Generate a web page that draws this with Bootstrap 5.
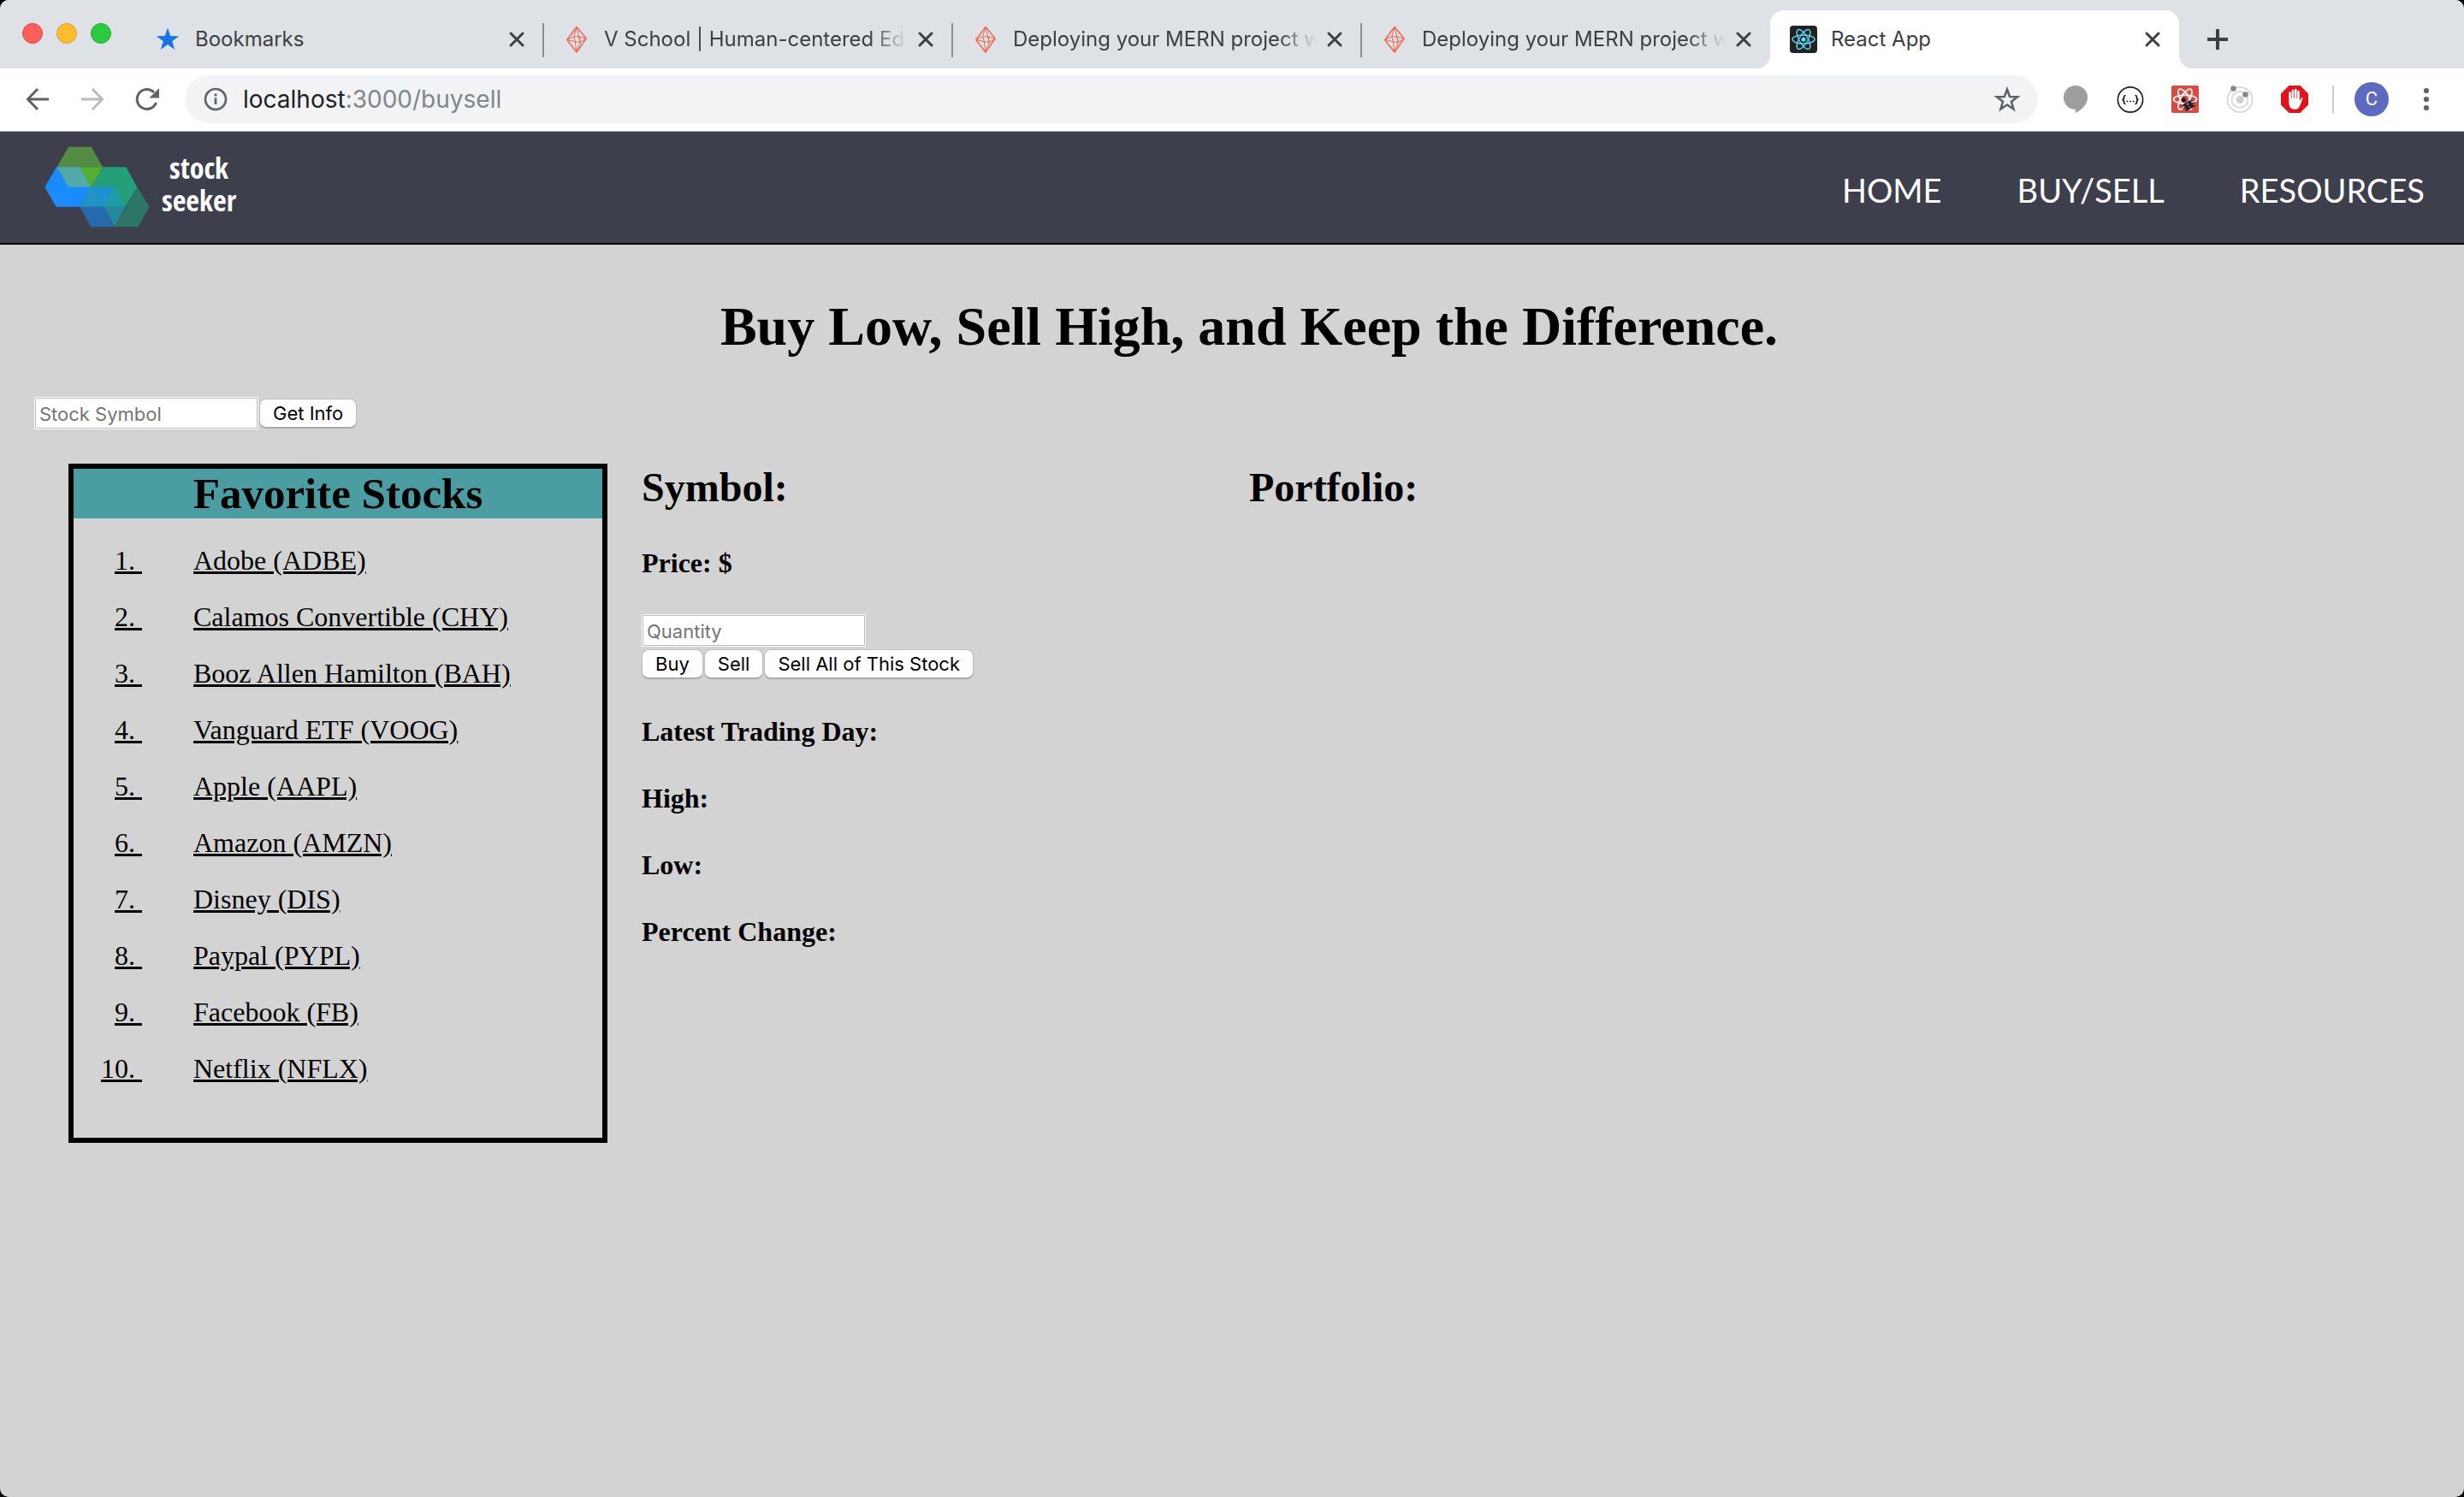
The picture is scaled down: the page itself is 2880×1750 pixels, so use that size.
<!DOCTYPE html>
<html lang="en">
<head>
<meta charset="utf-8">
<meta name="viewport" content="width=device-width, initial-scale=1">
<title>React App</title>
<link rel="stylesheet" href="https://cdn.jsdelivr.net/npm/bootstrap@5.3.0/dist/css/bootstrap.min.css">
<style>
  body { background: #000; font-family: Inter, "Liberation Sans", sans-serif; }
  svg { display: block; flex: none; }
  .browser { background: #d3d3d3; border-radius: 10px; overflow: hidden; }

  /* Tab strip */
  .tab-strip { background: #dee1e6; height: 80px; padding-top: 12px; }
  .lights { width: 157px; padding: 15px 0 0 26px; gap: 16px; }
  .light { width: 24px; height: 24px; border-radius: 50%; border: 1px solid; }
  .light-close { background: #ff5f58; border-color: #e0443e; }
  .light-min { background: #ffbd2e; border-color: #dea123; }
  .light-max { background: #2aca41; border-color: #1aab29; }
  .btab { width: 478px; height: 68px; padding: 0 15px 0 23px; position: relative; }
  .btab-line::after { content: ""; position: absolute; right: -1px; top: 15px; width: 2px; height: 40px; background: #898d92; }
  .btab-title { margin-left: 16px; font-size: 24px; line-height: 32px; color: #3c4043; white-space: nowrap; overflow: hidden; flex: 1; text-decoration: none; }
  .btab-fade { -webkit-mask-image: linear-gradient(to right, #000 calc(100% - 44px), transparent); mask-image: linear-gradient(to right, #000 calc(100% - 44px), transparent); }
  .btab-active { background: #fff; border-radius: 16px 16px 0 0; }
  .btab-active::before, .btab-active::after { content: ""; position: absolute; bottom: 0; width: 16px; height: 16px; }
  .btab-active::before { left: -16px; background: radial-gradient(circle at 0 0, transparent 16px, #fff 16px); }
  .btab-active::after { right: -16px; background: radial-gradient(circle at 100% 0, transparent 16px, #fff 16px); }
  .icon-btn { border: 0; background: none; padding: 0; width: 32px; height: 32px; flex: none; margin-left: 6px; }
  .icon-btn-plain { margin-left: 0; }
  .new-tab { margin: 18px 0 0 29px; }

  /* Toolbar */
  .toolbar { background: #fff; height: 74px; border-bottom: 1px solid #b0b0b3; padding: 8px 28px 9px; }
  .nav-arrows { gap: 32px; width: 188px; }
  .omnibox { background: #f1f3f4; border-radius: 28px; height: 56px; padding: 0 20px; flex: 1; }
  .address { font-size: 28px; line-height: 36px; margin-left: 16px; flex: 1; color: #80868b; }
  .address b { font-weight: 400; color: #202124; }
  .extensions { gap: 32px; margin-left: 28px; }
  .toolbar-rule { width: 2px; height: 32px; background: #ccced0; margin: 0 24px 0 28px; }
  .avatar { width: 40px; height: 40px; border: 0; border-radius: 50%; background: #5c6bc0; color: #fff; font: 22px/40px Roboto, sans-serif; padding: 0; margin-right: 28px; }

  /* Site header */
  .site-nav { background: #3d3f4d; height: 132px; border-bottom: 2px solid #000; padding: 0 46px 0 52px; }
  .brand-name { font: 34px/38px "Liberation Sans Narrow", "Open Sans Condensed", "Liberation Sans", sans-serif; color: #fff; text-align: center; margin-left: 14px; padding-bottom: 6px; }
  .site-brand { text-decoration: none; padding-bottom: 2px; }
  .site-links { gap: 88px; }
  .site-links a { font: 38px/48px Lato, sans-serif; color: #fff; text-decoration: none; padding-top: 6px; }

  /* Page */
  .page { font-family: "Liberation Serif", serif; color: #000; padding: 59px 0 412px 40px; }
  .page h1 { font-size: 64px; line-height: 74px; font-weight: 700; margin: 0 0 45px; text-align: center; }
  .page h2 { font-size: 48px; line-height: 56px; font-weight: 700; margin: 0 0 42px; }
  .page h3 { font-size: 32px; line-height: 36px; font-weight: 700; margin: 0 0 42px; }
  .field { display: block; width: 262px; height: 38px; border: 1px solid #fff; box-shadow: inset 0 0 0 1px #bdbdbd; border-radius: 0; background: #fff; padding: 1px 5px 0; font: 22px/28px Inter, sans-serif; color: #000; }
  .field::placeholder { color: #757575; opacity: 1; }
  .push { height: 34px; border: 1px solid #c0c0c0; border-bottom-color: #a2a2a2; border-radius: 8px; background: #fff; padding: 0 15px; font: 22px/30px Inter, sans-serif; color: #000; box-shadow: 0 1px 1px rgba(0,0,0,.18); white-space: nowrap; }
  .lookup { gap: 1px; margin-bottom: 40px; }
  .trade { margin-bottom: 42px; }
  .trade-buttons { gap: 1px; padding: 3px 0 2px; }
  .board > .favorites-col { padding: 0 40px; }
  .favorites { border: 6px solid #000; }
  .favorites h2 { background: #4a9ea1; font-size: 51px; line-height: 58px; margin: 0; text-align: center; }
  .favorites ol { list-style: none; margin: 0; padding: 16px 0 48px; }
  .favorites a { display: flex; gap: 60px; font-size: 32px; line-height: 66px; color: #000; text-decoration: none; }
  .favorites span { text-decoration: underline; white-space: pre; }
  .favorites .rank-cell { width: 80px; text-align: right; text-decoration: none; }
</style>
<script src="https://cdn.jsdelivr.net/npm/bootstrap@5.3.0/dist/js/bootstrap.bundle.min.js"></script>
</head>
<body>
<svg width="0" height="0" class="position-absolute" aria-hidden="true">
  <symbol id="i-close" viewBox="0 0 32 32"><path d="M9 9l14 14M23 9L9 23" stroke="#3c4043" stroke-width="3" fill="none" stroke-linecap="round"/></symbol>
  <symbol id="i-gem" viewBox="0 0 32 32"><g fill="none" stroke="#f0654e" stroke-linejoin="round"><path d="M16 1.500L4.700 16.500 16 31 27.200 15z" stroke-width="1.400"/><path d="M16 1.500L12.700 12.700 14.300 18.500 16 31 20.300 19 18.700 12.900zM4.700 16.500L12.700 12.700 18.700 12.900 27.200 15 20.300 19.500 14.300 18.700zM18.700 12.900L20.300 19" stroke-width="1"/></g></symbol>
</svg>
<div class="browser min-vh-100">
  <header class="tab-strip d-flex">
    <div class="lights d-flex">
      <span class="light light-close"></span><span class="light light-min"></span><span class="light light-max"></span>
    </div>
    <div class="btab btab-line d-flex align-items-center">
      <svg width="32" height="32" viewBox="0 0 32 32"><path fill="#1a73e8" d="M16 2.500l3.200 9.600 10 .1-8 6 3 9.800-8.200-5.900-8.200 5.900 3-9.800-8-6 10-.1z"/></svg>
      <a href="#" class="btab-title">Bookmarks</a>
      <button class="icon-btn" aria-label="Close tab"><svg width="32" height="32"><use href="#i-close"/></svg></button>
    </div>
    <div class="btab btab-line d-flex align-items-center">
      <svg width="32" height="32"><use href="#i-gem"/></svg>
      <a href="#" class="btab-title btab-fade">V School | Human-centered Ed</a>
      <button class="icon-btn" aria-label="Close tab"><svg width="32" height="32"><use href="#i-close"/></svg></button>
    </div>
    <div class="btab btab-line d-flex align-items-center">
      <svg width="32" height="32"><use href="#i-gem"/></svg>
      <a href="#" class="btab-title btab-fade">Deploying your MERN project w</a>
      <button class="icon-btn" aria-label="Close tab"><svg width="32" height="32"><use href="#i-close"/></svg></button>
    </div>
    <div class="btab d-flex align-items-center">
      <svg width="32" height="32"><use href="#i-gem"/></svg>
      <a href="#" class="btab-title btab-fade">Deploying your MERN project w</a>
      <button class="icon-btn" aria-label="Close tab"><svg width="32" height="32"><use href="#i-close"/></svg></button>
    </div>
    <div class="btab btab-active d-flex align-items-center">
      <svg width="32" height="32" viewBox="0 0 32 32"><rect width="32" height="32" rx="4" fill="#222"/><g fill="none" stroke="#61dafb" stroke-width="1.400"><ellipse cx="16" cy="16" rx="13" ry="5"/><ellipse cx="16" cy="16" rx="13" ry="5" transform="rotate(60 16 16)"/><ellipse cx="16" cy="16" rx="13" ry="5" transform="rotate(120 16 16)"/></g><circle cx="16" cy="16" r="2.600" fill="#61dafb"/></svg>
      <a href="#" class="btab-title">React App</a>
      <button class="icon-btn" aria-label="Close tab"><svg width="32" height="32"><use href="#i-close"/></svg></button>
    </div>
    <button class="icon-btn new-tab" aria-label="New tab"><svg width="32" height="32" viewBox="0 0 32 32"><path d="M16 4v24M4 16h24" stroke="#3c4043" stroke-width="4"/></svg></button>
  </header>

  <div class="toolbar d-flex align-items-center">
    <div class="nav-arrows d-flex">
      <button class="icon-btn icon-btn-plain" aria-label="Back"><svg width="32" height="32" viewBox="0 0 32 32"><path d="M29 16H5M16 4L4.500 16 16 28" fill="none" stroke="#5f6368" stroke-width="3"/></svg></button>
      <button class="icon-btn icon-btn-plain" aria-label="Forward"><svg width="32" height="32" viewBox="0 0 32 32"><path d="M3 16h24M16 4l11.500 12L16 28" fill="none" stroke="#babcbe" stroke-width="3"/></svg></button>
      <button class="icon-btn icon-btn-plain" aria-label="Reload"><svg width="32" height="32" viewBox="0 0 32 32"><path d="M26.500 20A11.500 11.500 0 1 1 24 8" fill="none" stroke="#5f6368" stroke-width="3"/><path d="M30 3v11.500H18.500z" fill="#5f6368"/></svg></button>
    </div>
    <div class="omnibox d-flex align-items-center">
      <svg width="32" height="32" viewBox="0 0 32 32"><circle cx="16" cy="16" r="12" fill="none" stroke="#5f6368" stroke-width="2.600"/><path d="M16 14.500V22M16 9.500v3" stroke="#5f6368" stroke-width="2.800"/></svg>
      <div class="address"><b>localhost</b>:3000/buysell</div>
      <button class="icon-btn icon-btn-plain" aria-label="Bookmark this page"><svg width="32" height="32" viewBox="0 0 32 32"><path d="M16 4.500l3.100 8.500 9 .3-7.100 5.500 2.500 8.700L16 22.500l-7.500 5 2.500-8.700L3.900 13.300l9-.3z" fill="none" stroke="#5f6368" stroke-width="2.600"/></svg></button>
    </div>
    <div class="extensions d-flex">
      <svg width="32" height="32" viewBox="0 0 32 32"><path d="M16 26v6c5-2.500 9.500-6 12-11z" fill="#9e9e9e"/><circle cx="16" cy="14" r="14" fill="#9e9e9e"/></svg>
      <svg width="32" height="32" viewBox="0 0 32 32"><circle cx="16" cy="16.500" r="14.600" fill="#fff" stroke="#222" stroke-width="1.700"/><g fill="none" stroke="#111" stroke-width="1.700"><path d="M10.500 11.500c-2 0-2 .8-2 2.500s-.3 2.500-2 2.500c1.700 0 2 .8 2 2.500s0 2.500 2 2.500M21.500 11.500c2 0 2 .8 2 2.500s.3 2.500 2 2.500c-1.700 0-2 .8-2 2.500s0 2.500-2 2.500"/><path d="M11.500 18.500h9" stroke-dasharray="1.700 1.900"/></g></svg>
      <svg width="32" height="32" viewBox="0 0 32 32"><rect width="32" height="32" rx="2" fill="#d84b40"/><g fill="none" stroke="#fff" stroke-width="1.700"><ellipse cx="16" cy="16" rx="13.500" ry="5"/><ellipse cx="16" cy="16" rx="13.500" ry="5" transform="rotate(60 16 16)"/><ellipse cx="16" cy="16" rx="13.500" ry="5" transform="rotate(120 16 16)"/></g><g fill="#222" transform="rotate(-30 19 21)"><circle cx="17" cy="15" r="2.800"/><rect x="14" y="19" width="4" height="9" rx="1.500"/><rect x="19.500" y="19" width="4" height="9" rx="1.500"/><path d="M12 19.500h14V21H12zM11.500 23h15v1.400h-15zM12.500 26.500h13V28h-13z"/></g></svg>
      <svg width="32" height="32" viewBox="0 0 32 32"><g fill="none" stroke="#dadada" stroke-width="2"><circle cx="16" cy="16.500" r="14.500"/><circle cx="16" cy="16.500" r="9.500"/></g><circle cx="16" cy="16.500" r="4.500" fill="#d0d0d0"/><circle cx="8.500" cy="3.500" r="3.300" fill="#868686"/><circle cx="22.500" cy="10.500" r="3.300" fill="#868686"/></svg>
      <svg width="32" height="32" viewBox="0 0 32 32"><path d="M9.500 0h13L32 9.500v13L22.500 32h-13L0 22.500v-13z" fill="#e1131a"/><path d="M9.300 19V8.500a1.300 1.300 0 0 1 2.600 0V15h.7V6a1.300 1.300 0 0 1 2.600 0v9h.7V5a1.300 1.300 0 0 1 2.600 0v10h.7V7a1.300 1.300 0 0 1 2.600 0v11l2-3.600c.8-1 2-.4 1.500 1-1 2.600-2.300 6.500-3.500 9-1.200 2.600-3 3.300-5.700 3.300-4.500 0-6.800-3-6.800-8.700z" fill="#fff"/></svg>
    </div>
    <div class="toolbar-rule"></div>
    <button class="avatar" aria-label="Profile">C</button>
    <button class="icon-btn icon-btn-plain" aria-label="Menu"><svg width="32" height="32" viewBox="0 0 32 32"><g fill="#5f6368"><circle cx="16" cy="6" r="3.100"/><circle cx="16" cy="16" r="3.100"/><circle cx="16" cy="26" r="3.100"/></g></svg></button>
  </div>

  <nav class="site-nav d-flex align-items-center justify-content-between">
    <a href="#" class="site-brand d-flex align-items-center">
      <svg width="123" height="95" viewBox="66 63 369 285">
        <path fill="#548c44" d="M150 65h80l40 71H110z"/>
        <path fill="#1a8cff" d="M67 206l41-70h82l40 70-40 69h-83z"/>
        <path fill="#52aaa8" d="M110 136h80l40 70h-80z"/>
        <path fill="#55b031" d="M190 136h80l-40 70z"/>
        <path fill="#2d7565" d="M391 206l43 69-40 71h-82z"/>
        <path fill="#23a079" d="M270 136h82l39 70-41 69H190l40-69z"/>
        <path fill="#2293c5" d="M230 206l43 69h-83z"/>
        <path fill="#1c92d2" d="M230 206h82l-39 69z"/>
        <path fill="#209ca8" d="M312 206l38 69h-77z"/>
        <path fill="#2869ad" d="M190 275h83l39 71h-83z"/>
        <path fill="#24889d" d="M273 275h77l-38 71z"/>
      </svg>
      <span class="brand-name">stock<br>seeker</span>
    </a>
    <div class="site-links d-flex">
      <a href="#">HOME</a><a href="#">BUY/SELL</a><a href="#">RESOURCES</a>
    </div>
  </nav>

  <main class="page">
    <h1>Buy Low, Sell High, and Keep the Difference.</h1>
    <form class="lookup d-flex align-items-center">
      <input class="field" type="text" placeholder="Stock Symbol" aria-label="Stock Symbol">
      <button class="push" type="button">Get Info</button>
    </form>
    <div class="board row g-0">
      <div class="col-3 favorites-col">
        <section class="favorites">
          <h2>Favorite Stocks</h2>
          <ol>
            <li><a href="#"><span class="rank-cell"><span>1. </span></span><span>Adobe (ADBE)</span></a></li>
            <li><a href="#"><span class="rank-cell"><span>2. </span></span><span>Calamos Convertible (CHY)</span></a></li>
            <li><a href="#"><span class="rank-cell"><span>3. </span></span><span>Booz Allen Hamilton (BAH)</span></a></li>
            <li><a href="#"><span class="rank-cell"><span>4. </span></span><span>Vanguard ETF (VOOG)</span></a></li>
            <li><a href="#"><span class="rank-cell"><span>5. </span></span><span>Apple (AAPL)</span></a></li>
            <li><a href="#"><span class="rank-cell"><span>6. </span></span><span>Amazon (AMZN)</span></a></li>
            <li><a href="#"><span class="rank-cell"><span>7. </span></span><span>Disney (DIS)</span></a></li>
            <li><a href="#"><span class="rank-cell"><span>8. </span></span><span>Paypal (PYPL)</span></a></li>
            <li><a href="#"><span class="rank-cell"><span>9. </span></span><span>Facebook (FB)</span></a></li>
            <li><a href="#"><span class="rank-cell"><span>10. </span></span><span>Netflix (NFLX)</span></a></li>
          </ol>
        </section>
      </div>
      <div class="col-3">
        <h2>Symbol:</h2>
        <h3>Price: $</h3>
        <form class="trade">
          <input class="field" type="text" placeholder="Quantity" aria-label="Quantity">
          <div class="trade-buttons d-flex">
            <button class="push" type="button">Buy</button>
            <button class="push" type="button">Sell</button>
            <button class="push" type="button">Sell All of This Stock</button>
          </div>
        </form>
        <h3>Latest Trading Day:</h3>
        <h3>High:</h3>
        <h3>Low:</h3>
        <h3>Percent Change:</h3>
      </div>
      <div class="col-3">
        <h2>Portfolio:</h2>
      </div>
    </div>
  </main>
</div>
</body>
</html>
